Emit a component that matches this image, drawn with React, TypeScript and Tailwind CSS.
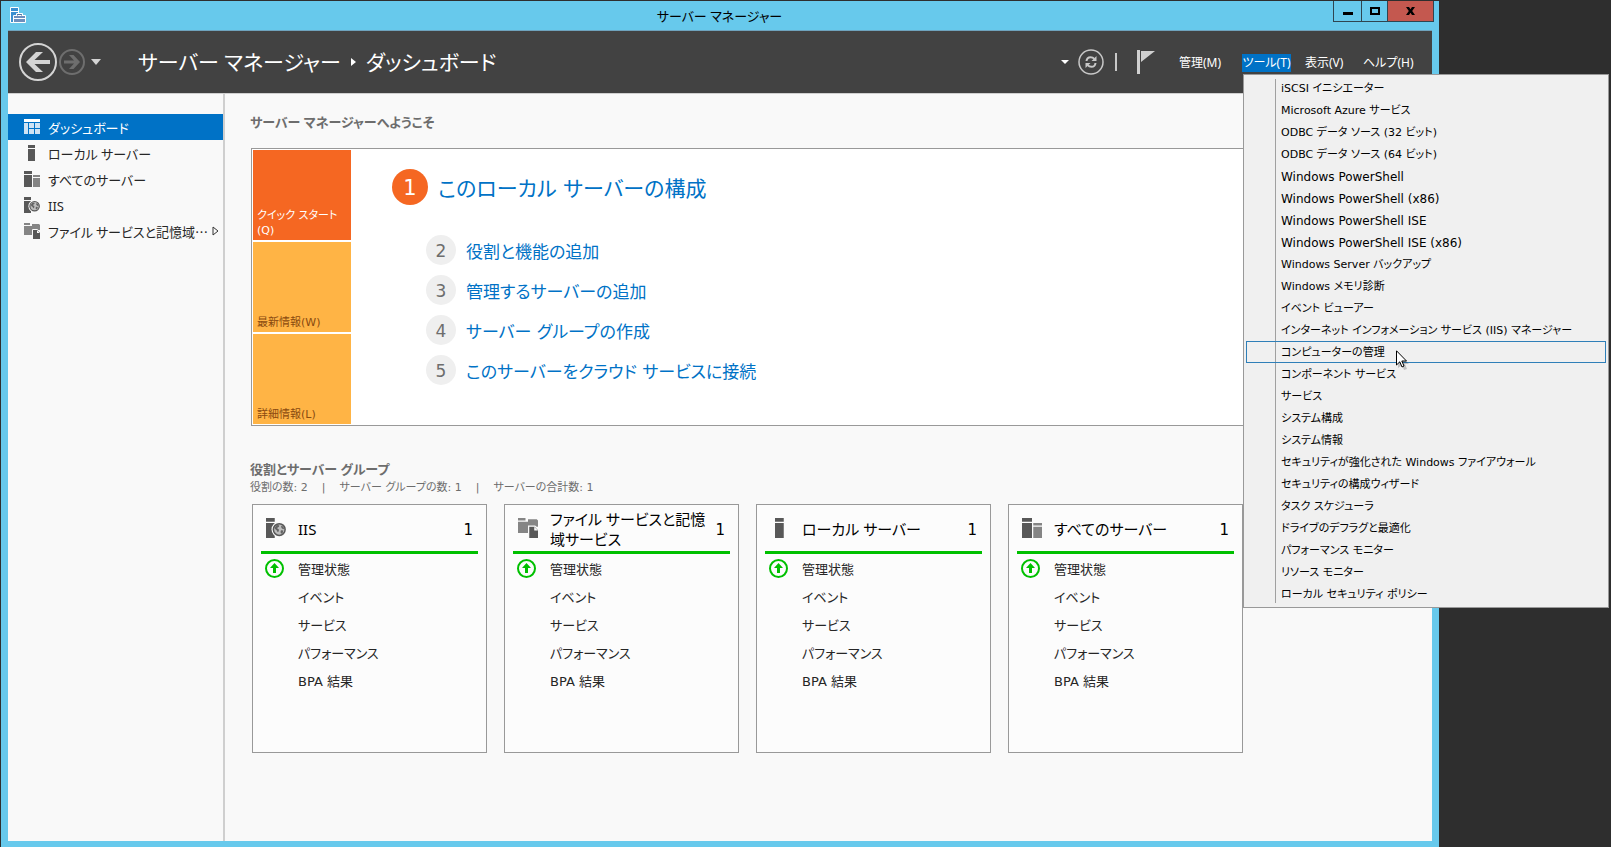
import type { ReactNode } from 'react'
import clsx from 'clsx'

type IconName = 'dashboard' | 'server' | 'servers' | 'iis' | 'files'

interface NavItem {
  label: string
  icon: IconName
  active?: boolean
  expandable?: boolean
}

interface ToolItem {
  label: string
  latin?: boolean
  hovered?: boolean
}

const navItems: NavItem[] = [
  { label: 'ダッシュボード', icon: 'dashboard', active: true },
  { label: 'ローカル サーバー', icon: 'server' },
  { label: 'すべてのサーバー', icon: 'servers' },
  { label: 'IIS', icon: 'iis' },
  { label: 'ファイル サービスと記憶域…', icon: 'files', expandable: true },
]

const toolItems: ToolItem[] = [
  { label: 'iSCSI イニシエーター' },
  { label: 'Microsoft Azure サービス' },
  { label: 'ODBC データ ソース (32 ビット)' },
  { label: 'ODBC データ ソース (64 ビット)' },
  { label: 'Windows PowerShell', latin: true },
  { label: 'Windows PowerShell (x86)', latin: true },
  { label: 'Windows PowerShell ISE', latin: true },
  { label: 'Windows PowerShell ISE (x86)', latin: true },
  { label: 'Windows Server バックアップ' },
  { label: 'Windows メモリ診断' },
  { label: 'イベント ビューアー' },
  { label: 'インターネット インフォメーション サービス (IIS) マネージャー' },
  { label: 'コンピューターの管理', hovered: true },
  { label: 'コンポーネント サービス' },
  { label: 'サービス' },
  { label: 'システム構成' },
  { label: 'システム情報' },
  { label: 'セキュリティが強化された Windows ファイアウォール' },
  { label: 'セキュリティの構成ウィザード' },
  { label: 'タスク スケジューラ' },
  { label: 'ドライブのデフラグと最適化' },
  { label: 'パフォーマンス モニター' },
  { label: 'リソース モニター' },
  { label: 'ローカル セキュリティ ポリシー' },
]

const steps = ['役割と機能の追加', '管理するサーバーの追加', 'サーバー グループの作成', 'このサーバーをクラウド サービスに接続']

const cards: { title: string; icon: IconName }[] = [
  { title: 'IIS', icon: 'iis' },
  { title: 'ファイル サービスと記憶域サービス', icon: 'files' },
  { title: 'ローカル サーバー', icon: 'server' },
  { title: 'すべてのサーバー', icon: 'servers' },
]

const cardRows = ['イベント', 'サービス', 'パフォーマンス', 'BPA 結果']

const iconShapes: Record<IconName, ReactNode> = {
  dashboard: (
    <>
      <path fill="#fff" d="M0 0h16v3H0z" />
      <path fill="#cfe3f4" d="M0 4h4v11H0zM5 4h5v5H5zM11 4h5v5h-5zM5 10h5v5H5zM11 10h5v5h-5z" />
    </>
  ),
  server: <path fill="#585858" d="M4 0h7v3H4zM4 4h7v12H4z" />,
  servers: (
    <>
      <path fill="#585858" d="M0 0h8v3H0zM0 4h8v12H0z" />
      <path fill="#858585" d="M9 4h7v2H9zM9 7h7v9H9z" />
    </>
  ),
  iis: (
    <>
      <path fill="#585858" d="M0 0h7v3H0zM0 4h7v12H0z" />
      <circle cx="10.600" cy="9.200" r="6.200" fill="#fafafa" />
      <circle cx="10.600" cy="9.200" r="4.700" fill="#bdbdbd" stroke="#585858" strokeWidth="1.200" />
      <path
        fill="#636363"
        d="M7 7.500l1.600-2 2 .2-.2 1.300-1.300.7.100.900 1.200.5-.2 1.400-.8.9-.9-1.600-1.300-.9zM12 6.200l1.700.6.900 1.600-.9.500-1.300-.9zM12 9.800l1.800.2-.4 1.700-1.300.9-.5-1.400z"
      />
    </>
  ),
  files: (
    <>
      <path fill="#858585" d="M0 0h6v2H0zM0 3h8V1h7l1 1v5H8v5H0z" />
      <path fill="#585858" stroke="#fafafa" strokeWidth="1" d="M8.500 6.500h5l3 3v7h-8z" />
      <path fill="#fafafa" d="M13 7l3 3h-3z" />
    </>
  ),
}

function NodeIcon({ name, className }: { name: IconName; className: string }) {
  return (
    <svg viewBox="0 0 16 16" className={className} aria-hidden="true">
      {iconShapes[name]}
    </svg>
  )
}

function TitleBar() {
  return (
    <div className="flex h-[29px] items-start bg-[#67c9ec]">
      <svg viewBox="0 0 16 16" className="mt-1.5 ml-[9px] size-4" aria-hidden="true">
        <path fill="#3a8fd0" stroke="#fff" d="M.5.5h8v15h-8z" />
        <path fill="#fff" d="M1 4h7v1H1z" />
        <path fill="#6d8fbd" stroke="#fff" d="M3.500 8.500h12v7h-12z" />
        <path fill="none" stroke="#fff" d="M6.500 8.500v-2h6v2M4 11.500h11" />
        <path fill="none" stroke="#54719c" d="M7.500 8.500v-1h4v1" />
      </svg>
      <h1 className="flex-1 pl-20 text-center text-[13px] leading-[30px] text-black">サーバー マネージャー</h1>
      <div className="mr-[5px] flex h-[21px] border-x border-b border-[#2f4550]">
        <button aria-label="最小化" className="flex w-7 items-center justify-center border-r border-[#2f4550]">
          <span className="mt-1 h-[3px] w-[10px] bg-black" />
        </button>
        <button aria-label="最大化" className="flex w-[26px] items-center justify-center border-r border-[#2f4550]">
          <span className="h-2 w-[10px] border-2 border-black" />
        </button>
        <button aria-label="閉じる" className="flex w-[45px] items-center justify-center bg-[#c4584f]">
          <svg viewBox="0 0 9 8" className="h-2 w-[9px]" aria-hidden="true">
            <path fill="#000" d="M0 0h3l1.500 2.200L6 0h3L6.200 4 9 8H6L4.500 5.800 3 8H0l2.800-4z" />
          </svg>
        </button>
      </div>
    </div>
  )
}

function ToolsMenu() {
  return (
    <div className="absolute top-full left-px z-10 mt-0.5 w-[366px] border border-[#999] bg-[#f0f0f0] p-0.5 font-['DejaVu_Sans','Noto_Sans_CJK_JP',sans-serif] text-black">
      <span className="absolute top-1 bottom-1 left-[31px] w-px bg-[#a0a0a0]" />
      <ul>
        {toolItems.map((item) => (
          <li key={item.label}>
            <button
              className={clsx(
                'relative block h-[22px] w-full border pt-0.5 pl-[34px] text-left leading-[18px] whitespace-nowrap',
                item.hovered ? 'border-[#2f7fb8]' : 'border-transparent',
                item.latin ? 'text-xs' : 'text-[11px]',
              )}
            >
              {item.label}
            </button>
          </li>
        ))}
      </ul>
      <svg viewBox="0 0 13 20" className="absolute top-[275px] left-[152px] h-5 w-[13px]" aria-hidden="true">
        <path fill="#0003" d="M2 3v15l4-3 2 5 3-1-2-5h4z" />
        <path fill="#fff" stroke="#000" d="M.5.800v14.200l3.300-3.200 2.200 5.200 2-1-2.200-5h4.700z" />
      </svg>
    </div>
  )
}

function Header() {
  return (
    <header className="flex h-[63px] items-center border-b border-[#d0d0d0] bg-[#424242] text-white">
      <button aria-label="戻る" className="ml-[11px]">
        <svg viewBox="0 0 38 38" className="size-[38px]" aria-hidden="true">
          <circle cx="19" cy="19" r="18" fill="none" stroke="#d4d4d4" strokeWidth="2" />
          <path fill="#d4d4d4" d="M7 19L17 9h7l-8.500 8H31v4H15.500l8.500 8h-7z" />
        </svg>
      </button>
      <button aria-label="進む" className="ml-0.5">
        <svg viewBox="0 0 26 26" className="size-[26px]" aria-hidden="true">
          <circle cx="13" cy="13" r="12" fill="none" stroke="#6e6e6e" strokeWidth="2" />
          <path fill="#6e6e6e" d="M21 13l-6.500 7H10l5-5.500H5v-3h10L10 6h4.500z" />
        </svg>
      </button>
      <button aria-label="履歴" className="ml-1.5">
        <svg viewBox="0 0 10 6" className="h-1.5 w-2.5" aria-hidden="true">
          <path fill="#d4d4d4" d="M0 0h10L5 6z" />
        </svg>
      </button>
      <nav className="ml-[37px] flex items-center gap-2.5 text-[21px] leading-8 whitespace-nowrap">
        <a href="#root">サーバー マネージャー</a>
        <svg viewBox="0 0 5 8" className="h-2 w-[5px]" aria-hidden="true">
          <path fill="#fff" d="M0 0l5 4-5 4z" />
        </svg>
        <a href="#dashboard">ダッシュボード</a>
      </nav>
      <div className="ml-auto flex items-center">
        <button aria-label="通知の一覧">
          <svg viewBox="0 0 8 4" className="h-1 w-2" aria-hidden="true">
            <path fill="#fff" d="M0 0h8L4 4z" />
          </svg>
        </button>
        <button aria-label="更新" className="ml-[9px]">
          <svg viewBox="0 0 26 26" className="size-[26px]" aria-hidden="true">
            <circle cx="13" cy="13" r="12" fill="none" stroke="#c8c8c8" strokeWidth="1.500" />
            <path
              fill="none"
              stroke="#c8c8c8"
              strokeWidth="2"
              d="M8.500 12c.3-2.800 1.800-3.800 4-3.800 1.600 0 2.800.5 3.800 1.600M17.500 14c-.3 2.800-1.800 3.800-4 3.800-1.600 0-2.800-.5-3.800-1.600"
            />
            <path fill="#c8c8c8" d="M18.500 7v5h-5zM7.500 19v-5h5z" />
          </svg>
        </button>
        <span className="ml-[11px] h-[18px] w-0.5 bg-[#c8c8c8]" />
        <button aria-label="通知" className="ml-5">
          <svg viewBox="0 0 18 24" className="h-6 w-[18px]" aria-hidden="true">
            <path fill="#d0d0d0" d="M0 0h3v24H0zM4 1h14L4 12z" />
          </svg>
        </button>
        <div className="ml-6 flex items-center gap-3.5 pt-px text-xs leading-[18px] whitespace-nowrap">
          <button className="mr-[3px] w-[46px] text-left">管理(M)</button>
          <div className="relative">
            <button className="block w-[49px] bg-[#0072c6]">ツール(T)</button>
            <ToolsMenu />
          </div>
          <button className="w-11 text-left">表示(V)</button>
          <button className="mr-5 w-[49px] text-left">ヘルプ(H)</button>
        </div>
      </div>
    </header>
  )
}

function Sidebar() {
  return (
    <nav className="w-[217px] shrink-0 border-r-2 border-[#cfcfcf] pt-5">
      {navItems.map((item) => (
        <a
          key={item.label}
          href={`#${item.icon}`}
          className={clsx(
            'flex h-[26px] items-center pl-4 text-[13px] leading-5',
            item.active ? 'bg-[#0072c6] text-white' : 'text-[#262626]',
          )}
        >
          <NodeIcon name={item.icon} className="size-4 shrink-0" />
          <span
            className={clsx(
              'ml-2 pt-0.5 whitespace-nowrap',
              item.expandable && "font-['Noto_Sans_CJK_JP',sans-serif]",
            )}
          >
            {item.label}
          </span>
          {item.expandable ? (
            <svg viewBox="0 0 7 10" className="mr-1 ml-auto h-2.5 w-[7px] shrink-0" aria-hidden="true">
              <path fill="none" stroke="#333" d="M1 1l5 4-5 4z" />
            </svg>
          ) : null}
        </a>
      ))}
    </nav>
  )
}

function WelcomePanel() {
  return (
    <section className="flex border border-[#999] bg-white p-px font-['DejaVu_Sans','Noto_Sans_CJK_JP',sans-serif]">
      <div className="flex w-[98px] shrink-0 flex-col gap-0.5 text-[11px] leading-[15px]">
        <button className="flex h-[90px] items-end bg-[#f56722] px-1 pb-0.5 text-left text-white">
          クイック スタート
          <br />
          (Q)
        </button>
        <button className="flex h-[90px] items-end bg-[#ffb445] px-1 pb-0.5 text-left text-[#8a4a10]">最新情報(W)</button>
        <button className="flex h-[90px] items-end bg-[#ffb445] px-1 pb-0.5 text-left text-[#8a4a10]">詳細情報(L)</button>
      </div>
      <div className="pt-[19px] pl-[41px] text-[#0072c6]">
        <a href="#configure" className="flex h-9 items-center gap-2.5 text-[21px] leading-8">
          <span className="flex size-9 items-center justify-center rounded-full bg-[#f56722] pt-0.5 text-white">1</span>
          <span className="pt-1">このローカル サーバーの構成</span>
        </a>
        <ol className="mt-[30px] ml-[34px] flex flex-col gap-2.5">
          {steps.map((step, i) => (
            <li key={step}>
              <a href={`#step-${i + 2}`} className="flex h-[30px] items-center gap-2.5 text-[17px] leading-6">
                <span className="flex size-[30px] items-center justify-center rounded-full bg-[#efefef] pt-0.5 text-[#6d6d6d]">
                  {i + 2}
                </span>
                <span className="pt-1">{step}</span>
              </a>
            </li>
          ))}
        </ol>
      </div>
    </section>
  )
}

function ServerCard({ title, icon }: { title: string; icon: IconName }) {
  return (
    <article className="h-[249px] w-[235px] shrink-0 border border-[#999] bg-[#fcfcfc] px-2 text-[13px] text-[#262626]">
      <header className="flex h-[49px] items-center border-b-[3px] border-[#00c000] text-[15px] leading-5 text-black">
        <NodeIcon name={icon} className="ml-[5px] size-5 shrink-0" />
        <h3 className="ml-3 w-[156px] pt-0.5">{title}</h3>
        <span className="mr-[5px] ml-auto pt-1 font-['DejaVu_Sans',sans-serif]">1</span>
      </header>
      <ul className="font-['DejaVu_Sans','Noto_Sans_CJK_JP',sans-serif]">
        <li className="flex h-7 items-center">
          <svg viewBox="0 0 19 19" className="ml-1 size-[19px]" aria-hidden="true">
            <circle cx="9.500" cy="9.500" r="8.500" fill="none" stroke="#00c000" strokeWidth="2" />
            <path fill="#00c000" d="M9.500 4L14 9h-3v5H8V9H5z" />
          </svg>
          <a href="#manageability" className="ml-3.5 pt-1">管理状態</a>
        </li>
        {cardRows.map((row) => (
          <li key={row} className="flex h-7 items-center pt-1 pl-[37px]">
            <a href="#details">{row}</a>
          </li>
        ))}
      </ul>
    </article>
  )
}

export default function App() {
  return (
    <div className="min-h-screen bg-[#2e2e2e] pt-px pr-[172px] pl-px font-['Noto_Sans','Noto_Sans_CJK_JP',sans-serif] [font-feature-settings:'palt']">
      <div className="flex min-h-[calc(100vh-1px)] flex-col bg-[#67c9ec]">
        <TitleBar />
        <div className="mx-[7px] mb-1.5 flex flex-1 flex-col border-t border-[#6fa3bd] bg-[#f9f9f9]">
          <Header />
          <div className="flex flex-1">
            <Sidebar />
            <main className="min-w-0 flex-1 pt-[18px] pr-4 pl-[25px]">
              <h2 className="text-[13px] leading-5 font-semibold text-[#6d6d6d]">サーバー マネージャーへようこそ</h2>
              <div className="mt-4 ml-px">
                <WelcomePanel />
              </div>
              <h2 className="mt-[33px] text-[13px] leading-5 font-semibold text-[#6d6d6d]">役割とサーバー グループ</h2>
              <p className="flex gap-3.5 pt-px font-['DejaVu_Sans','Noto_Sans_CJK_JP',sans-serif] text-[11px] leading-4 text-[#6d6d6d]">
                <span>役割の数: 2</span>
                <span>|</span>
                <span>サーバー グループの数: 1</span>
                <span>|</span>
                <span>サーバーの合計数: 1</span>
              </p>
              <div className="mt-2 ml-0.5 flex gap-[17px]">
                {cards.map((card) => (
                  <ServerCard key={card.title} title={card.title} icon={card.icon} />
                ))}
              </div>
            </main>
          </div>
        </div>
      </div>
    </div>
  )
}
